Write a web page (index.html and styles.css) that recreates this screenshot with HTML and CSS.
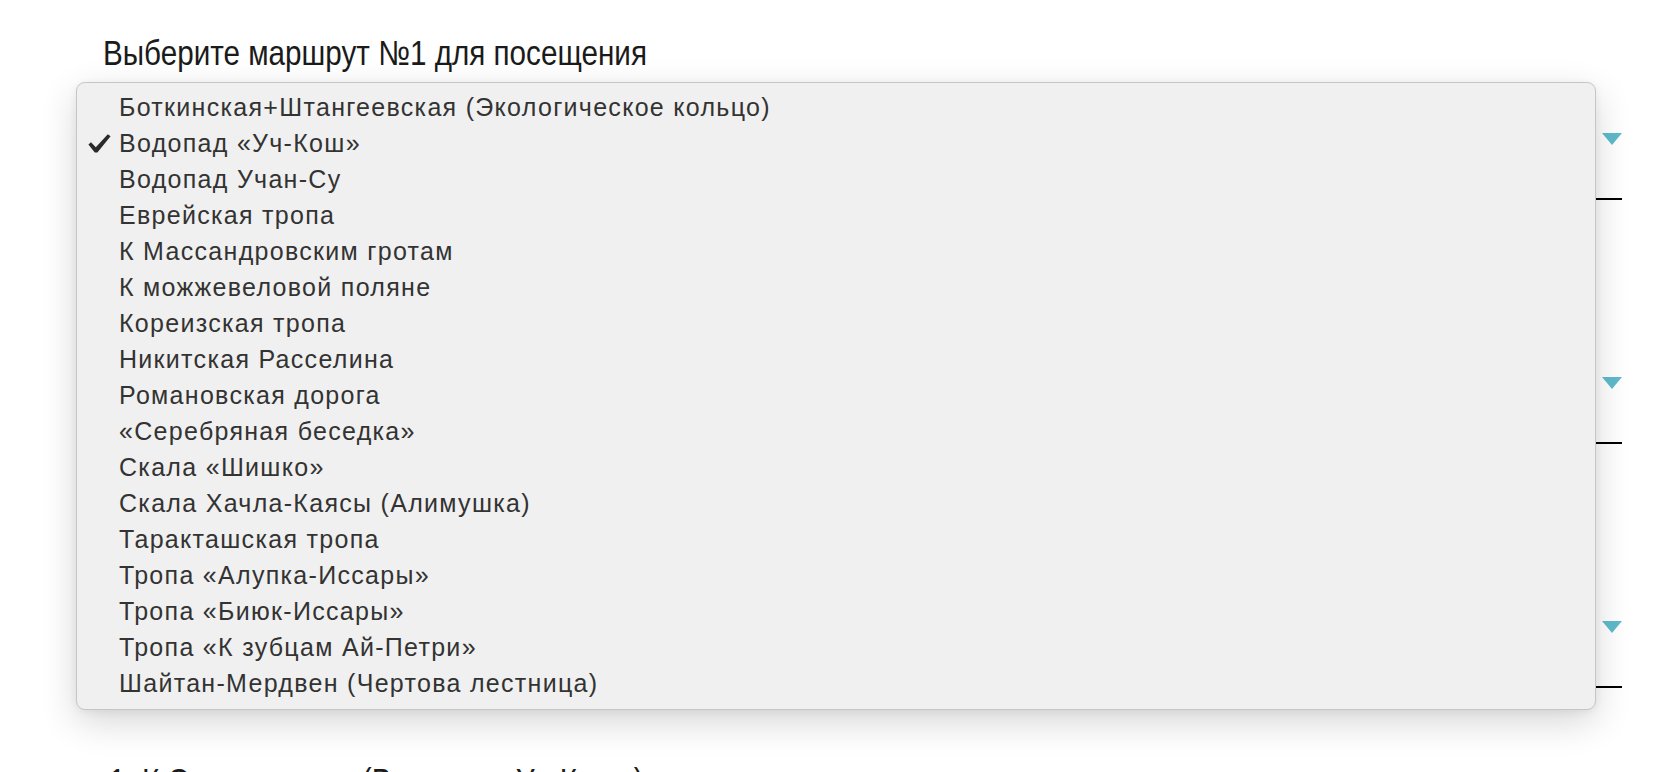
FILE: index.html
```html
<!DOCTYPE html>
<html lang="ru">
<head>
<meta charset="utf-8">
<title>Выбор маршрута</title>
<link rel="stylesheet" href="styles.css">
</head>
<body>
<div class="page">
  <div class="field">
    <div class="field-label"><span class="label-text">Выберите маршрут №1 для посещения</span></div>
    <div class="select"><span class="select-value">Водопад «Уч-Кош»</span><span class="arrow"></span></div>
  </div>
  <div class="field">
    <div class="field-label"><span class="label-text">Выберите маршрут №2 для посещения</span></div>
    <div class="select"><span class="select-value">Еврейская тропа</span><span class="arrow"></span></div>
  </div>
  <div class="field">
    <div class="field-label"><span class="label-text">Выберите маршрут №3 для посещения</span></div>
    <div class="select"><span class="select-value">Кореизская тропа</span><span class="arrow"></span></div>
  </div>
  <div class="summary"><span class="label-text">1. К Оползневому (Водопад «Уч-Кош»)</span></div>
</div>

<div class="menu">
  <div class="menu-item"><span class="check"></span><span class="item-text">Боткинская+Штангеевская (Экологическое кольцо)</span></div>
  <div class="menu-item selected"><span class="check"><svg width="23" height="19" viewBox="0 0 23 19"><path d="M0.4 10.6 L3.0 8.2 L7.8 13.2 L19.8 0.3 L22.6 2.2 L9.4 18.6 L6.8 18.6 Z" fill="#2a2a2a"/></svg></span><span class="item-text">Водопад «Уч-Кош»</span></div>
  <div class="menu-item"><span class="check"></span><span class="item-text">Водопад Учан-Су</span></div>
  <div class="menu-item"><span class="check"></span><span class="item-text">Еврейская тропа</span></div>
  <div class="menu-item"><span class="check"></span><span class="item-text">К Массандровским гротам</span></div>
  <div class="menu-item"><span class="check"></span><span class="item-text">К можжевеловой поляне</span></div>
  <div class="menu-item"><span class="check"></span><span class="item-text">Кореизская тропа</span></div>
  <div class="menu-item"><span class="check"></span><span class="item-text">Никитская Расселина</span></div>
  <div class="menu-item"><span class="check"></span><span class="item-text">Романовская дорога</span></div>
  <div class="menu-item"><span class="check"></span><span class="item-text">«Серебряная беседка»</span></div>
  <div class="menu-item"><span class="check"></span><span class="item-text">Скала «Шишко»</span></div>
  <div class="menu-item"><span class="check"></span><span class="item-text">Скала Хачла-Каясы (Алимушка)</span></div>
  <div class="menu-item"><span class="check"></span><span class="item-text">Таракташская тропа</span></div>
  <div class="menu-item"><span class="check"></span><span class="item-text">Тропа «Алупка-Иссары»</span></div>
  <div class="menu-item"><span class="check"></span><span class="item-text">Тропа «Биюк-Иссары»</span></div>
  <div class="menu-item"><span class="check"></span><span class="item-text">Тропа «К зубцам Ай-Петри»</span></div>
  <div class="menu-item"><span class="check"></span><span class="item-text">Шайтан-Мердвен (Чертова лестница)</span></div>
</div>
</body>
</html>
```

FILE: styles.css
```css
html, body {
  margin: 0;
  padding: 0;
  background: #ffffff;
  overflow: hidden;
}

.page {
  width: 1678px;
  height: 772px;
  overflow: hidden;
  box-sizing: border-box;
  padding: 26px 56px 0 103px;
  font-family: "Liberation Sans Narrow", "Liberation Sans", Arial, sans-serif;
  color: #1b1b1b;
}

.field {
  display: flex;
  flex-direction: column;
  margin-bottom: 70px;
}

.field-label,
.summary {
  height: 54px;
  line-height: 54px;
  font-size: 35px;
  white-space: nowrap;
}

.field-label {
  flex: none;
}

.label-text {
  display: inline-block;
  transform: scaleX(0.847);
  transform-origin: left center;
}

.select {
  height: 120px;
  flex: none;
  box-sizing: border-box;
  border-bottom: 2px solid #000;
  display: flex;
  align-items: center;
  justify-content: space-between;
  font-family: "Liberation Sans", Arial, sans-serif;
  font-size: 24px;
  color: #333;
}

.arrow {
  width: 0;
  height: 0;
  border-left: 10px solid transparent;
  border-right: 10px solid transparent;
  border-top: 12px solid #5fbacb;
}

.summary {
  margin-top: -4px;
  padding-left: 6px;
}

.menu {
  position: absolute;
  left: 76px;
  top: 82px;
  width: 1520px;
  height: 628px;
  box-sizing: border-box;
  padding: 6px 0 8px 0;
  background: #f0f0f0;
  border: 1px solid #c6c6c6;
  border-radius: 9px;
  box-shadow: 0 12px 36px rgba(0, 0, 0, 0.16), 0 2px 8px rgba(0, 0, 0, 0.06);
  font-family: "Liberation Sans", Arial, sans-serif;
  font-size: 25px;
  color: #333333;
}

.menu-item {
  display: flex;
  align-items: center;
  height: 36px;
  white-space: nowrap;
}

.check {
  width: 42px;
  flex: none;
  display: flex;
  align-items: center;
  padding-left: 11px;
  box-sizing: border-box;
}

.check svg {
  display: block;
}

.item-text {
  letter-spacing: 1.3px;
}
```
